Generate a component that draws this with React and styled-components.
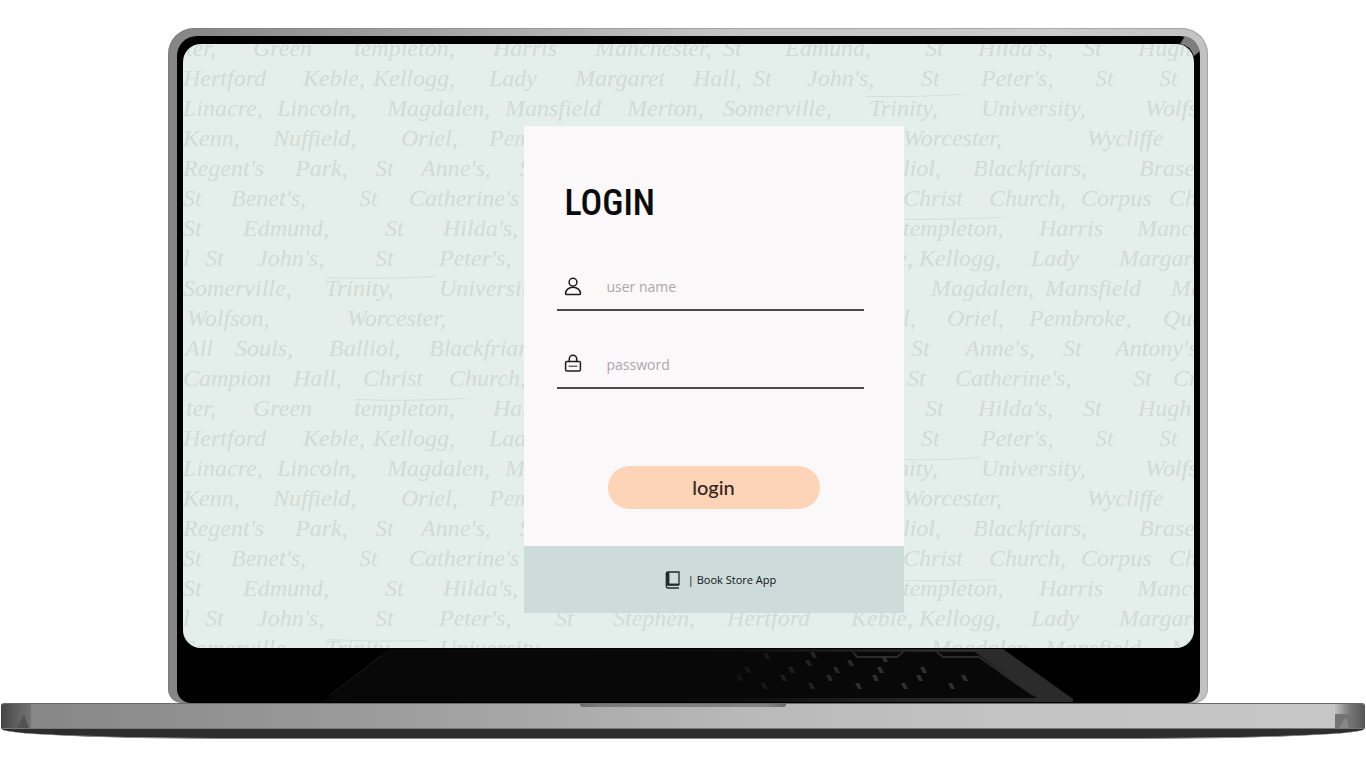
import React from "react";
import styled, { createGlobalStyle } from "styled-components";

const GlobalStyle = createGlobalStyle`
  *, *::before, *::after { box-sizing: border-box; }
  body { margin: 0; background: #ffffff; font-family: "Open Sans", "Noto Sans", sans-serif; }
`;

const Page = styled.main`
  display: flex;
  flex-direction: column;
  min-height: 100vh;
  padding-top: 28px;
`;

const Lid = styled.div`
  position: relative;
  margin: 0 158px 0 168px;
  padding: 8px 8px 0 9px;
  border-radius: 26px 26px 14px 14px;
  background: linear-gradient(90deg, #858585 0%, #a3a3a3 25%, #c6c6c6 55%, #cccccc 85%, #c2c2c2 100%);
  box-shadow: inset 0 0 0 1px rgba(110, 110, 110, 0.35);
`;

const Bezel = styled.div`
  padding: 8px 6px 0;
  border-radius: 20px 20px 14px 14px;
  background: #000000;
`;

const Screen = styled.div`
  position: relative;
  display: flex;
  justify-content: center;
  padding: 82px 0 35px 50px;
  border-radius: 18px;
  overflow: hidden;
  background: #e4efeb;
`;

const Wallpaper = styled.svg`
  position: absolute;
  inset: 0;
  width: 100%;
  height: 100%;
  font: italic 24px "Liberation Serif", serif;
  fill: #d0dbd7;
`;

const Glare = styled.svg`
  position: absolute;
  top: 8px;
  right: 8px;
  width: 22px;
  height: 22px;
`;

const Reflection = styled.svg`
  display: block;
  width: 100%;
  height: 55px;
`;

const Deck = styled.div`
  display: flex;
  justify-content: space-between;
  height: 26px;
  margin: 0 1px;
  border-top: 1px solid #6b6b6b;
  border-bottom: 1px solid #777777;
  border-radius: 3px 3px 0 0;
  overflow: hidden;
  background: linear-gradient(90deg, #858585 0%, #9c9c9c 28%, #b9b9b9 55%, #c4c4c4 75%, #c6c6c6 100%);
`;

const DeckEnd = styled.svg`
  width: 30px;
  height: 24px;
`;

const Notch = styled.div`
  width: 206px;
  height: 3px;
  border-radius: 0 0 6px 6px;
  background: linear-gradient(90deg, #6a6a6a, #7b7b7b 10%, #858585 90%, #6a6a6a);
`;

const Underside = styled.div`
  height: 10px;
  margin: 0 2px;
  border-bottom: 1px solid #8a8a8a;
  border-radius: 0 0 240px 240px / 0 0 10px 10px;
  background: #2d2d2d;
`;

const Card = styled.form`
  position: relative;
  display: flex;
  flex-direction: column;
  width: 380px;
  margin: 0;
  background: #faf8f9;
`;

const Fields = styled.div`
  display: flex;
  flex-direction: column;
  gap: 32px;
  padding: 53px 40px 0 33px;
`;

const Title = styled.h1`
  margin: 0 0 6px;
  padding-left: 8px;
  font-family: "Roboto Condensed", "Liberation Sans Narrow", "Roboto", sans-serif;
  font-size: 36px;
  line-height: 48px;
  font-weight: 500;
  color: #0b0b0b;
`;

const Field = styled.label`
  display: flex;
  align-items: center;
  gap: 25px;
  height: 46px;
  padding: 0 7px 2px;
  border-bottom: 2px solid #4b494c;
`;

const FieldIcon = styled.svg`
  flex: none;
  width: 18px;
  height: 20px;
  fill: none;
  stroke: #1c1c1c;
  stroke-width: 1.5;
  stroke-linecap: round;
  stroke-linejoin: round;
`;

const Input = styled.input`
  flex: 1;
  min-width: 0;
  height: 32px;
  padding: 0;
  border: 0;
  outline: 0;
  background: transparent;
  font-family: "Open Sans", "Noto Sans", sans-serif;
  font-size: 14px;
  font-weight: 400;
  color: #333333;

  &::placeholder { color: #aaa8a9; opacity: 1; }
`;

const Actions = styled.div`
  display: flex;
  justify-content: center;
  padding: 77px 0 37px;
`;

const LoginButton = styled.button`
  width: 212px;
  height: 43px;
  padding: 0 0 2px;
  border: 0;
  border-radius: 22px;
  background: #fed4b8;
  font-family: "Lato", sans-serif;
  font-size: 20px;
  font-weight: 500;
  color: #33251d;
  cursor: pointer;
`;

const Brand = styled.footer`
  display: flex;
  align-items: center;
  justify-content: center;
  gap: 8px;
  height: 67px;
  padding-left: 14px;
  background: #cddbda;
  font-size: 11px;
  font-weight: 500;
  color: #0f1516;
`;

const BookIcon = styled.svg`
  width: 15px;
  height: 18px;
`;

const LINE_HEIGHT = 30;
const FIRST_BASELINE = 12;

// Each line of the letter: [x, word] pairs.
const letter = [
  [[3, "ter,"], [70, "Green"], [171, "templeton,"], [310, "Harris"], [412, "Manchester,"], [540, "St"], [602, "Edmund,"], [742, "St"], [795, "Hilda's,"], [900, "St"], [955, "Hugh's"]],
  [[0, "Hertford"], [120, "Keble,"], [190, "Kellogg,"], [306, "Lady"], [392, "Margaret"], [510, "Hall,"], [570, "St"], [624, "John's,"], [738, "St"], [798, "Peter's,"], [912, "St"], [976, "St"]],
  [[0, "Linacre,"], [94, "Lincoln,"], [204, "Magdalen,"], [322, "Mansfield"], [444, "Merton,"], [540, "Somerville,"], [686, "Trinity,"], [798, "University,"], [962, "Wolfson"]],
  [[0, "Kenn,"], [90, "Nuffield,"], [218, "Oriel,"], [306, "Pembroke,"], [720, "Worcester,"], [904, "Wycliffe"]],
  [[0, "Regent's"], [112, "Park,"], [192, "St"], [238, "Anne's,"], [336, "St"], [720, "liol,"], [790, "Blackfriars,"], [956, "Brasenose"]],
  [[0, "St"], [48, "Benet's,"], [176, "St"], [226, "Catherine's"], [720, "Christ"], [806, "Church,"], [898, "Corpus"], [986, "Christi"]],
  [[0, "St"], [60, "Edmund,"], [202, "St"], [260, "Hilda's,"], [720, "templeton,"], [856, "Harris"], [954, "Manchester"]],
  [[0, "l"], [22, "St"], [74, "John's,"], [192, "St"], [256, "Peter's,"], [372, "St"], [430, "Stephen,"], [544, "Hertford"], [668, "Keble,"], [736, "Kellogg,"], [848, "Lady"], [936, "Margaret"]],
  [[0, "Somerville,"], [142, "Trinity,"], [256, "University,"], [748, "Magdalen,"], [862, "Mansfield"], [988, "Merton"]],
  [[4, "Wolfson,"], [164, "Worcester,"], [720, "l,"], [764, "Oriel,"], [846, "Pembroke,"], [980, "Queen's"]],
  [[2, "All"], [52, "Souls,"], [146, "Balliol,"], [246, "Blackfriars"], [728, "St"], [782, "Anne's,"], [880, "St"], [932, "Antony's"]],
  [[0, "Campion"], [110, "Hall,"], [180, "Christ"], [266, "Church,"], [724, "St"], [772, "Catherine's,"], [950, "St"], [990, "Cross"]],
];

const pageLines = Array.from({ length: 21 }, (_, i) => letter[i % letter.length]);

const keyGlints = [
  [580, 5], [627, 4], [622, 12], [664, 12], [698, 8], [561, 19], [605, 19], [650, 19], [694, 19], [737, 19],
  [553, 27], [597, 27], [643, 27], [689, 27], [733, 27], [778, 27], [578, 35], [625, 35], [672, 35], [718, 35], [765, 35],
];

function Handwriting() {
  return (
    <Wallpaper viewBox="0 0 1011 605" preserveAspectRatio="xMidYMid slice" aria-hidden="true">
      {pageLines.map((words, row) =>
        words.map(([x, word]) => (
          <text key={`${row}-${x}`} x={x} y={FIRST_BASELINE + row * LINE_HEIGHT}>
            {word}
          </text>
        ))
      )}
      <g stroke="#d3dfdb" strokeWidth="1" fill="none">
        <path d="M144 234q50 2 108-1M682 53q50 1 96-2M722 176q40 0 96-2M172 356q50 2 110-1M722 416q40 1 74-2M722 537q40 1 90-1M144 596q50 3 100 1" />
      </g>
    </Wallpaper>
  );
}

export default function App() {
  return (
    <>
      <GlobalStyle />
      <Page>
        <Lid>
          <Bezel>
            <Screen>
              <Handwriting />
              <Card onSubmit={(event) => event.preventDefault()}>
                <Fields>
                  <Title>LOGIN</Title>
                  <Field>
                    <FieldIcon viewBox="0 0 18 20" aria-hidden="true">
                      <circle cx="9" cy="6.2" r="3.9" />
                      <path d="M9 11.200C4.500 11.200 1.700 14.200 1.500 17.400Q1.500 18.600 2.800 18.600H15.200Q16.500 18.600 16.500 17.400C16.300 14.200 13.500 11.200 9 11.200Z" />
                    </FieldIcon>
                    <Input type="text" placeholder="user name" aria-label="user name" />
                  </Field>
                  <Field>
                    <FieldIcon viewBox="0 0 18 20" aria-hidden="true">
                      <path d="M5.300 7.500V5a3.700 3.700 0 0 1 7.400 0V7.500" />
                      <rect x="1.600" y="7.500" width="14.800" height="9.500" rx="1.300" />
                      <path d="M5 12.200h8" strokeWidth="1" />
                    </FieldIcon>
                    <Input type="password" placeholder="password" aria-label="password" />
                  </Field>
                </Fields>
                <Actions>
                  <LoginButton type="submit">login</LoginButton>
                </Actions>
                <Brand>
                  <BookIcon viewBox="0 0 15 18" aria-hidden="true">
                    <path d="M3 1h11v12.500H3.500V1M3 1Q1.300 1 1.300 3v12Q1.300 17 3.200 17H14" fill="none" stroke="#20292b" strokeWidth="1.300" />
                    <path d="M1.300 2h3v12.500h-3zM2 12.800h12v1.900H2z" fill="#20292b" />
                  </BookIcon>
                  <span>| Book Store App</span>
                </Brand>
              </Card>
            </Screen>
            <Reflection viewBox="0 0 1011 55" preserveAspectRatio="none" aria-hidden="true">
              <defs>
                <linearGradient id="rim" x1="0" x2="1" y1="0" y2="0">
                  <stop offset="0" stopColor="#070707" />
                  <stop offset="0.55" stopColor="#0c0c0c" />
                  <stop offset="0.85" stopColor="#2b2b2b" />
                  <stop offset="1" stopColor="#2b2b2b" />
                </linearGradient>
                <linearGradient id="glint" gradientUnits="userSpaceOnUse" x1="540" x2="690" y1="0" y2="0">
                  <stop offset="0" stopColor="#101010" />
                  <stop offset="1" stopColor="#303030" />
                </linearGradient>
              </defs>
              <path d="M205 1H820L890 51V54H140Z" fill="url(#rim)" />
              <path d="M203 4H792L854 50H146Z" fill="#080808" />
              <path d="M198 8L147 47" stroke="#1b1b1b" fill="none" />
              <path d="M670 4l4 5h40l6-5M754 4l6 5h36l54 38" stroke="#2b2b2b" strokeWidth="2" fill="none" />
              {keyGlints.map(([x, y]) => (
                <path key={`${x}-${y}`} d={`M${x} ${y}h4l3 6h-4z`} fill="url(#glint)" />
              ))}
            </Reflection>
          </Bezel>
          <Glare viewBox="0 0 22 22" aria-hidden="true">
            <path d="M7 0Q18 2 22 15L16 20Q12 9 2 8Z" fill="#7d7d7d" />
          </Glare>
        </Lid>
        <Deck>
          <DeckEnd viewBox="0 0 30 24" aria-hidden="true">
            <defs>
              <linearGradient id="left-end">
                <stop offset="0" stopColor="#454545" />
                <stop offset="0.6" stopColor="#626262" />
                <stop offset="1" stopColor="#747474" />
              </linearGradient>
            </defs>
            <path d="M0 0H30V24H0Z" fill="url(#left-end)" />
            <path d="M16 24L23 11L28 24Z" fill="#525252" />
          </DeckEnd>
          <Notch />
          <DeckEnd viewBox="0 0 30 24" aria-hidden="true">
            <defs>
              <linearGradient id="right-end">
                <stop offset="0" stopColor="#c0c0c0" />
                <stop offset="0.5" stopColor="#777777" />
                <stop offset="1" stopColor="#555555" />
              </linearGradient>
            </defs>
            <path d="M0 0H30V24H0Z" fill="url(#right-end)" />
            <path d="M0 10H13L18 24H0Z" fill="#747474" />
            <path d="M4 24L11 13L14 24Z" fill="#888888" />
          </DeckEnd>
        </Deck>
        <Underside />
      </Page>
    </>
  );
}
